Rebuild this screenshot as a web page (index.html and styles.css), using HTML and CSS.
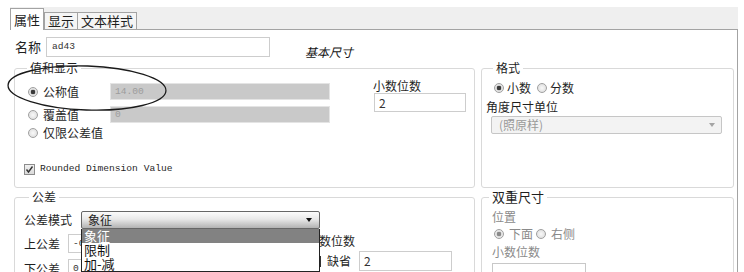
FILE: index.html
```html
<!DOCTYPE html>
<html lang="zh">
<head>
    <meta charset="UTF-8">
    <title>尺寸属性</title>
    <link rel="stylesheet" href="styles.css">
</head>
<body>
    <!--对话框整体-->
    <div class="window">
        <!--选项卡-->
        <div class="tabs">
            <span class="tab active">属性</span>
            <span class="tab">显示</span>
            <span class="tab">文本样式</span>
        </div>

        <div class="panel">
            <!--名称一行-->
            <div class="name-row">
                <span class="name-label">名称</span>
                <span class="field mono name-field">ad43</span>
                <span class="kind">基本尺寸</span>
            </div>

            <div class="groups">
                <!--值和显示-->
                <fieldset class="group value-group">
                    <legend>值和显示</legend>
                    <div class="value-body">
                        <div class="opts">
                            <div class="opt-row">
                                <span class="radio on"></span>
                                <span class="opt-text">公称值</span>
                                <span class="field off mono">14.00</span>
                            </div>
                            <div class="opt-row second">
                                <span class="radio"></span>
                                <span class="opt-text">覆盖值</span>
                                <span class="field off mono">0</span>
                            </div>
                            <div class="opt-row third">
                                <span class="radio"></span>
                                <span class="opt-text">仅限公差值</span>
                            </div>
                            <div class="check-row">
                                <span class="check on">
                                    <svg width="9" height="9" viewBox="0 0 9 9"><polyline points="1.5,4.5 3.5,7 7.5,1.5" fill="none" stroke="#333" stroke-width="1.4"/></svg>
                                </span>
                                <span class="mono">Rounded Dimension Value</span>
                            </div>
                        </div>
                        <div class="side">
                            <div>小数位数</div>
                            <span class="field side-field">2</span>
                        </div>
                    </div>
                </fieldset>

                <!--格式-->
                <fieldset class="group format-group">
                    <legend>格式</legend>
                    <div class="radio-line">
                        <span class="radio on"></span><span>小数</span>
                        <span class="radio gap"></span><span>分数</span>
                    </div>
                    <div class="fmt-label">角度尺寸单位</div>
                    <div class="select off">
                        <span>(照原样)</span>
                        <span class="arrow grey"></span>
                    </div>
                </fieldset>

                <!--公差-->
                <fieldset class="group tol-group">
                    <legend>公差</legend>
                    <div class="mode-row">
                        <span class="mode-label">公差模式</span>
                        <div class="combo">
                            <span>象征</span>
                            <span class="arrow"></span>
                            <!--展开的下拉列表-->
                            <ul class="drop">
                                <li class="picked">象征</li>
                                <li>限制</li>
                                <li>加-减</li>
                            </ul>
                        </div>
                    </div>
                    <div class="tol-body">
                        <div class="tol-fields">
                            <div class="tol-row">
                                <span class="tol-label">上公差</span>
                                <span class="field mono tol-field">-0.01</span>
                            </div>
                            <div class="tol-row">
                                <span class="tol-label">下公差</span>
                                <span class="field mono tol-field">0.01</span>
                            </div>
                        </div>
                        <div class="tol-side">
                            <div>小数位数</div>
                            <div class="default-row">
                                <span class="check dark"></span>
                                <span class="default-text">缺省</span>
                                <span class="field tol-digits">2</span>
                            </div>
                        </div>
                    </div>
                </fieldset>

                <!--双重尺寸-->
                <fieldset class="group dual-group">
                    <legend>双重尺寸</legend>
                    <div>位置</div>
                    <div class="radio-line dual-radios">
                        <span class="radio on dim"></span><span>下面</span>
                        <span class="radio gap"></span><span>右侧</span>
                    </div>
                    <div class="dual-label">小数位数</div>
                    <span class="field dual-field"></span>
                </fieldset>
            </div>
        </div>

        <!--手画的圈注-->
        <svg class="mark" width="744" height="272" viewBox="0 0 744 272">
            <ellipse cx="87" cy="88" rx="79" ry="22" transform="rotate(2 87 88)" fill="none" stroke="#1a1a1a" stroke-width="1.3"/>
        </svg>
    </div>
</body>
</html>
```

FILE: styles.css
```css
*{
    margin: 0;
    padding: 0;
    box-sizing: border-box;
}

body{
    font-family: "Noto Sans CJK SC", "Noto Sans", sans-serif;
    font-size: 12px;
    line-height: 14px;
    color: #1f1f1f;
    background-color: #fff;
    overflow: hidden;
}

/*整体*/
.window{
    position: relative;
    width: 738px;
    padding-top: 7px;
}

/*选项卡*/
.tabs{
    display: flex;
    align-items: flex-end;
    height: 23px;
    margin-left: 10px;
    background-color: #efefef;
    border-bottom: 1px solid #a3a3a3;
}

.tab{
    height: 17px;
    padding: 0 3px;
    margin-left: -1px;
    border: 1px solid #a3a3a3;
    border-bottom: none;
    background-color: #f5f5f5;
    font-size: 13px;
    line-height: 16px;
}

.tab.active{
    height: 22px;
    margin-left: 0;
    margin-right: 1px;
    margin-bottom: -1px;
    background-color: #fff;
    line-height: 21px;
}

/*主面板*/
.panel{
    height: 250px;
    margin-left: 10px;
    padding: 7px 3px 0 4px;
    border-right: 1px solid #a3a3a3;
    background-color: #fff;
}

.name-row{
    display: flex;
    align-items: flex-start;
    height: 20px;
}

.name-label{
    width: 32px;
    padding-left: 1px;
    font-size: 13px;
    line-height: 20px;
}

.kind{
    margin-left: 35px;
    margin-top: 8px;
    font-style: italic;
    color: #111;
}

/*输入框*/
.field{
    display: flex;
    align-items: center;
    height: 19px;
    padding-left: 4px;
    border: 1px solid #cdcdcd;
    background-color: #fff;
    color: #333;
}

.field.off{
    width: 220px;
    height: 17px;
    border-color: #e4e4e4;
    background-color: #c9c9c9;
    color: #9c9c9c;
}

.mono{
    font-family: "Liberation Mono", monospace;
    font-size: 9.6px;
}

.name-field{
    width: 224px;
    height: 20px;
    padding-left: 5px;
}

/*分组*/
.groups{
    display: grid;
    grid-template-columns: 461px 253px;
    column-gap: 6px;
    row-gap: 2px;
    margin-top: 4px;
}

.group{
    min-width: 0;
    border: 1px solid #d9d9d9;
    border-radius: 3px;
}

.group legend{
    padding: 0 3px;
    font-size: 12px;
    line-height: 14px;
    color: #1f1f1f;
}

/*单选框、复选框*/
.radio{
    flex: none;
    width: 10px;
    height: 10px;
    margin-right: 3px;
    border: 1px solid #a0a0a0;
    border-radius: 50%;
    background: radial-gradient(circle, #f9f9f9 0, #d8d8d8 100%);
}

.radio.on{
    background: radial-gradient(circle, #3a3a3a 0 2px, #dcdcdc 2.6px, #f4f4f4 100%);
}

.radio.on.dim{
    background: radial-gradient(circle, #8a8a8a 0 2px, #e2e2e2 2.6px, #f6f6f6 100%);
}

.radio.gap{
    margin-left: 6px;
}

.check{
    display: flex;
    align-items: center;
    justify-content: center;
    flex: none;
    width: 11px;
    height: 11px;
    border: 1px solid #8c8c8c;
    background: linear-gradient(#f0f0f0, #dadada);
}

.check.dark{
    border-color: #333;
    background: #fff;
}

/*值和显示*/
.value-group{
    padding: 8px 0 9px 9px;
}

.value-group legend{
    margin-left: 3px;
}

.value-body{
    display: flex;
    align-items: flex-start;
}

.opts{
    width: 306px;
}

.opt-row{
    display: flex;
    align-items: center;
    height: 17px;
}

.opt-row .radio{
    margin-left: 4px;
    margin-right: 5px;
}

.opt-row.second{
    margin-top: 6px;
}

.opt-row.third{
    margin-top: 1px;
}

.opt-text{
    width: 67px;
}

.check-row{
    display: flex;
    align-items: center;
    height: 18px;
    margin-top: 19px;
}

.check-row .check{
    margin-right: 5px;
}

.side{
    width: 93px;
    margin-left: 43px;
    margin-top: -4px;
}

.side-field{
    margin-left: 1px;
    width: 92px;
}

/*格式*/
.format-group{
    padding: 6px 0 0 4px;
}

.format-group legend{
    margin-left: 7px;
}

.radio-line{
    display: flex;
    align-items: center;
    height: 14px;
    margin-left: 8px;
}

.fmt-label{
    margin-top: 5px;
}

.select{
    display: flex;
    align-items: center;
    justify-content: space-between;
    width: 231px;
    height: 18px;
    margin-top: 2px;
    margin-left: 5px;
    padding: 0 6px 0 7px;
    border: 1px solid #c6c6c6;
    border-radius: 2px;
    background-color: #f3f3f3;
    color: #9a9a9a;
}

.arrow{
    width: 0;
    height: 0;
    border-left: 3px solid transparent;
    border-right: 3px solid transparent;
    border-top: 4px solid #111;
}

.arrow.grey{
    border-top-color: #a5a5a5;
}

/*公差*/
.tol-group{
    padding: 7px 0 0 9px;
}

.tol-group legend{
    margin-left: 5px;
}

.mode-row{
    display: flex;
    align-items: center;
    height: 18px;
}

.mode-label{
    width: 57px;
}

.combo{
    position: relative;
    display: flex;
    align-items: center;
    width: 239px;
    height: 18px;
    padding-left: 6px;
    border: 1px solid #666;
    border-radius: 2px;
    background: linear-gradient(#fbfbfb, #e8e8e8 45%, #b2b2b2);
}

.combo .arrow{
    margin-left: auto;
    margin-right: 7px;
}

/*下拉列表盖在下面的内容上*/
.drop{
    position: absolute;
    left: -1px;
    top: 17px;
    width: 239px;
    list-style: none;
    border: 1px solid #222;
    border-top: none;
    background-color: #fff;
    z-index: 2;
}

.drop li{
    height: 14px;
    padding-left: 2px;
    font-size: 13px;
    line-height: 14px;
    color: #111;
}

.drop li.picked{
    background-color: #828282;
    color: #fff;
}

.tol-body{
    display: flex;
    margin-top: 5px;
}

.tol-row{
    display: flex;
    align-items: center;
    height: 19px;
}

.tol-row + .tol-row{
    margin-top: 6px;
}

.tol-label{
    width: 44px;
}

.tol-field{
    width: 230px;
}

.tol-side{
    margin-left: 9px;
}

.default-row{
    display: flex;
    align-items: center;
    margin-top: 3px;
}

.default-row .check{
    margin-left: 3px;
}

.default-text{
    margin-left: 6px;
}

.tol-digits{
    width: 93px;
    height: 20px;
    margin-left: 8px;
}

/*双重尺寸*/
.dual-group{
    padding: 6px 0 0 10px;
    color: #8a8a8a;
}

.dual-group legend{
    margin-left: -3px;
    font-size: 13px;
}

.dual-radios{
    margin-top: 3px;
    margin-left: 2px;
}

.dual-radios .radio{
    margin-right: 5px;
}

.dual-radios .radio.gap{
    margin-left: 3px;
}

.dual-label{
    margin-top: 4px;
}

.dual-field{
    width: 94px;
    height: 20px;
    margin-top: 4px;
    border-color: #c8c8c8;
}

/*圈注*/
.mark{
    position: absolute;
    left: 0;
    top: 0;
    pointer-events: none;
    z-index: 3;
}
```
